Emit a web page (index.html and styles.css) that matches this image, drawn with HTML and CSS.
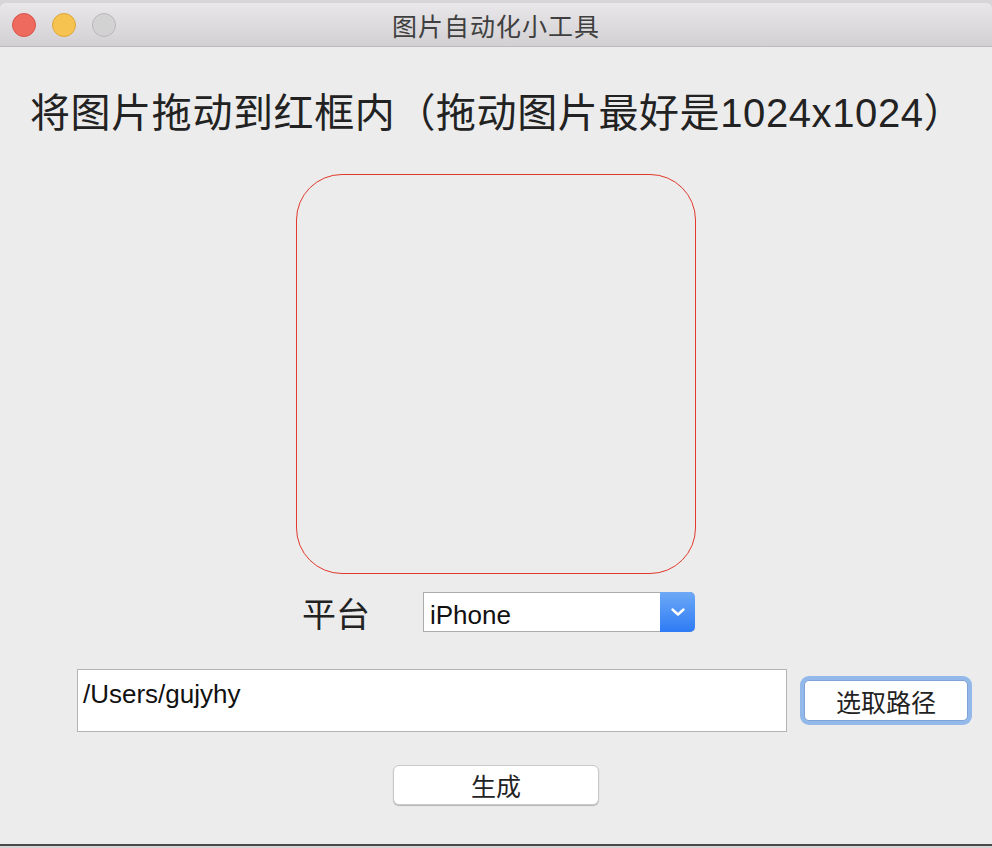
FILE: index.html
```html
<html>
<head>
  <meta charset="utf-8">
  <title>图片自动化小工具</title>
  <link rel="stylesheet" href="styles.css">
</head>
<body>
  <div id="window">
    <div class="titlebar">
      <div class="lights">
        <span class="light red"></span>
        <span class="light yellow"></span>
        <span class="light grey"></span>
      </div>
      <div class="title">图片自动化小工具</div>
    </div>

    <div class="content">
      <h1 class="hint">将图片拖动到红框内（拖动图片最好是1024x1024）</h1>

      <div class="dropzone"></div>

      <div class="platform">
        <span class="label">平台</span>
        <div class="select">
          <span class="value">iPhone</span>
          <span class="arrow">
            <svg width="16" height="10" viewBox="0 0 16 10">
              <path d="M2.5 2.5 L8 7.5 L13.5 2.5" fill="none" stroke="#fff" stroke-width="2.4" stroke-linecap="round" stroke-linejoin="round"/>
            </svg>
          </span>
        </div>
      </div>

      <div class="path-row">
        <div class="path-field">/Users/gujyhy</div>
        <div class="focus-ring">
          <button class="btn pick">选取路径</button>
        </div>
      </div>

      <div class="generate-row">
        <button class="btn generate">生成</button>
      </div>
    </div>
  </div>
</body>
</html>
```

FILE: styles.css
```css
html, body {
  margin: 0;
  padding: 0;
}

body {
  font-family: 'Liberation Sans', 'Noto Sans CJK SC', sans-serif;
  color: #222;
  background-color: #d6d6d6;
  width: 992px;
  height: 848px;
  overflow: hidden;
}

#window {
  margin-top: 3px;
  height: 843px;
  background-color: #ececec;
  border-radius: 6px 6px 0 0;
  border-bottom: 2px solid #4a4a4a;
  box-sizing: border-box;
  display: flex;
  flex-direction: column;
}

.titlebar {
  height: 44px;
  box-sizing: border-box;
  border-bottom: 1px solid #bcbcbc;
  border-radius: 6px 6px 0 0;
  background: linear-gradient(#e9e7e9, #d2d0d2);
  display: flex;
  align-items: center;
  position: relative;
}

.lights {
  display: flex;
  gap: 16px;
  padding-left: 12px;
}

.light {
  width: 24px;
  height: 24px;
  border-radius: 50%;
  box-sizing: border-box;
}

.light.red {
  background-color: #ee6a5f;
  border: 1px solid #d8544a;
}

.light.yellow {
  background-color: #f6c250;
  border: 1px solid #dea73a;
}

.light.grey {
  background-color: #d2d2d2;
  border: 1px solid #b9b9b9;
}

.title {
  position: absolute;
  left: 0;
  right: 0;
  text-align: center;
  font-size: 25px;
  color: #3f3f3f;
  letter-spacing: 1px;
}

.content {
  display: flex;
  flex-direction: column;
}

.hint {
  margin: 46px 0 0 30px;
  font-size: 40px;
  line-height: 40px;
  font-weight: normal;
  letter-spacing: 0.6px;
  color: #222;
  white-space: nowrap;
}

.dropzone {
  width: 400px;
  height: 400px;
  box-sizing: border-box;
  margin: 41px auto 0 296px;
  border: 1px solid #e2382d;
  border-radius: 46px;
}

.platform {
  display: flex;
  align-items: center;
  margin: 18px 0 0 302px;
  height: 40px;
}

.label {
  font-size: 34px;
  width: 121px;
  color: #222;
}

.select {
  display: flex;
  width: 272px;
  height: 40px;
  box-sizing: border-box;
  border: 1px solid #acacac;
  border-right: none;
  border-radius: 0 5px 5px 0;
  background-color: #fff;
}

.select .value {
  flex: 1;
  font-size: 26px;
  line-height: 38px;
  padding: 3px 0 0 6px;
  color: #111;
}

.select .arrow {
  width: 35px;
  margin: -1px 0;
  border-radius: 0 5px 5px 0;
  background: linear-gradient(#6da9f6, #2e7bf5);
  display: flex;
  align-items: center;
  justify-content: center;
}

.path-row {
  display: flex;
  align-items: center;
  margin: 37px 0 0 77px;
}

.path-field {
  width: 710px;
  height: 63px;
  box-sizing: border-box;
  border: 1px solid #b4b4b4;
  background-color: #fff;
  font-size: 26px;
  line-height: 26px;
  padding: 11px 0 0 5px;
  color: #111;
}

.focus-ring {
  margin-left: 13px;
  padding: 4px;
  border-radius: 9px;
  background-color: #93b8ea;
  display: flex;
}

.btn {
  font-family: 'Liberation Sans', 'Noto Sans CJK SC', sans-serif;
  font-size: 25px;
  color: #222;
  background-color: #fff;
  border-radius: 6px;
  padding: 0;
  display: flex;
  align-items: center;
  justify-content: center;
}

.btn.pick {
  width: 164px;
  height: 41px;
  border: 1px solid #7fa3d8;
  border-radius: 5px;
}

.generate-row {
  display: flex;
  margin-top: 33px;
  padding-left: 393px;
}

.btn.generate {
  width: 206px;
  height: 40px;
  border: 1px solid #c9c9c9;
  box-shadow: 0 1px 1px #b5b5b5;
}
```
